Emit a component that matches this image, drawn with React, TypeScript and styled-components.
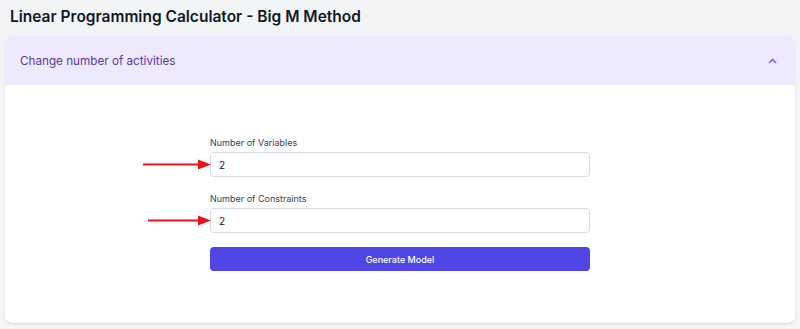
import React from "react";
import styled, { createGlobalStyle } from "styled-components";

const Global = createGlobalStyle`
  html, body { margin: 0; padding: 0; background: #f3f4f6; }
  body { font-family: Inter, "Noto Sans", sans-serif; }
  * { box-sizing: border-box; }
`;

const Page = styled.div`
  width: 800px;
  height: 329px;
  padding: 6px 5px 6px 5px;
  display: flex;
  flex-direction: column;
  background: #f3f4f6;
  overflow: hidden;
`;

const Title = styled.h1`
  margin: 0 0 0 5px;
  height: 30px;
  font-size: 15.5px;
  font-weight: 600;
  color: #111827;
  line-height: 22px;
`;

const Card = styled.section`
  flex: 1;
  display: flex;
  flex-direction: column;
  background: #fff;
  border-radius: 7px;
  overflow: hidden;
  box-shadow: 0 1px 2px rgba(0, 0, 0, 0.12);
`;

const Header = styled.div`
  height: 49px;
  display: flex;
  align-items: center;
  justify-content: space-between;
  padding: 0 18px 0 15px;
  background: #ede9fe;
`;

const HeaderText = styled.span`
  font-size: 11.7px;
  color: #5b3ba8;
`;

const Body = styled.div`
  flex: 1;
  display: flex;
  justify-content: center;
  padding-top: 52px;
`;

const Form = styled.div`
  width: 380px;
  display: flex;
  flex-direction: column;
  gap: 14px;
`;

const Field = styled.div`
  display: flex;
  flex-direction: column;
  & + & {
    margin-top: 2px;
  }
`;

const Label = styled.label`
  font-size: 9px;
  color: #374151;
  line-height: 12px;
  margin-bottom: 3px;
`;

const InputWrap = styled.div`
  position: relative;
`;

const Input = styled.input`
  width: 100%;
  height: 25px;
  border: 1px solid #d9dce1;
  border-radius: 4px;
  padding: 0 8px;
  font-family: Inter, "Noto Sans", sans-serif;
  font-size: 10px;
  color: #111827;
  background: #fff;
  outline: none;
`;

const Arrow = styled.svg<{ $len: number }>`
  position: absolute;
  top: 50%;
  right: calc(100% - 1px);
  width: ${(p) => p.$len}px;
  height: 11px;
  margin-top: -6px;
`;

const Button = styled.button`
  height: 24px;
  border: none;
  border-radius: 4px;
  background: #4f46e5;
  color: #fff;
  font-family: Inter, "Noto Sans", sans-serif;
  font-size: 9px;
  font-weight: 500;
`;

const RedArrow = ({ len }: { len: number }) => (
  <Arrow $len={len} viewBox={`0 0 ${len} 11`}>
    <line x1="0" y1="5.5" x2={len - 10} y2="5.5" stroke="#e8141a" strokeWidth="2.2" />
    <polygon points={`${len - 13},0.5 ${len},5.5 ${len - 13},10.5`} fill="#e8141a" />
  </Arrow>
);

export default function App() {
  return (
    <>
      <Global />
      <Page>
        <Title>Linear Programming Calculator - Big M Method</Title>
        <Card>
          <Header>
            <HeaderText>Change number of activities</HeaderText>
            <svg width="9" height="6" viewBox="0 0 9 6">
              <path d="M1 5 L4.5 1.5 L8 5" fill="none" stroke="#8b5cf6" strokeWidth="1.6" />
            </svg>
          </Header>
          <Body>
            <Form>
              <Field>
                <Label>Number of Variables</Label>
                <InputWrap>
                  <RedArrow len={68} />
                  <Input defaultValue="2" />
                </InputWrap>
              </Field>
              <Field>
                <Label>Number of Constraints</Label>
                <InputWrap>
                  <RedArrow len={63} />
                  <Input defaultValue="2" />
                </InputWrap>
              </Field>
              <Button>Generate Model</Button>
            </Form>
          </Body>
        </Card>
      </Page>
    </>
  );
}
